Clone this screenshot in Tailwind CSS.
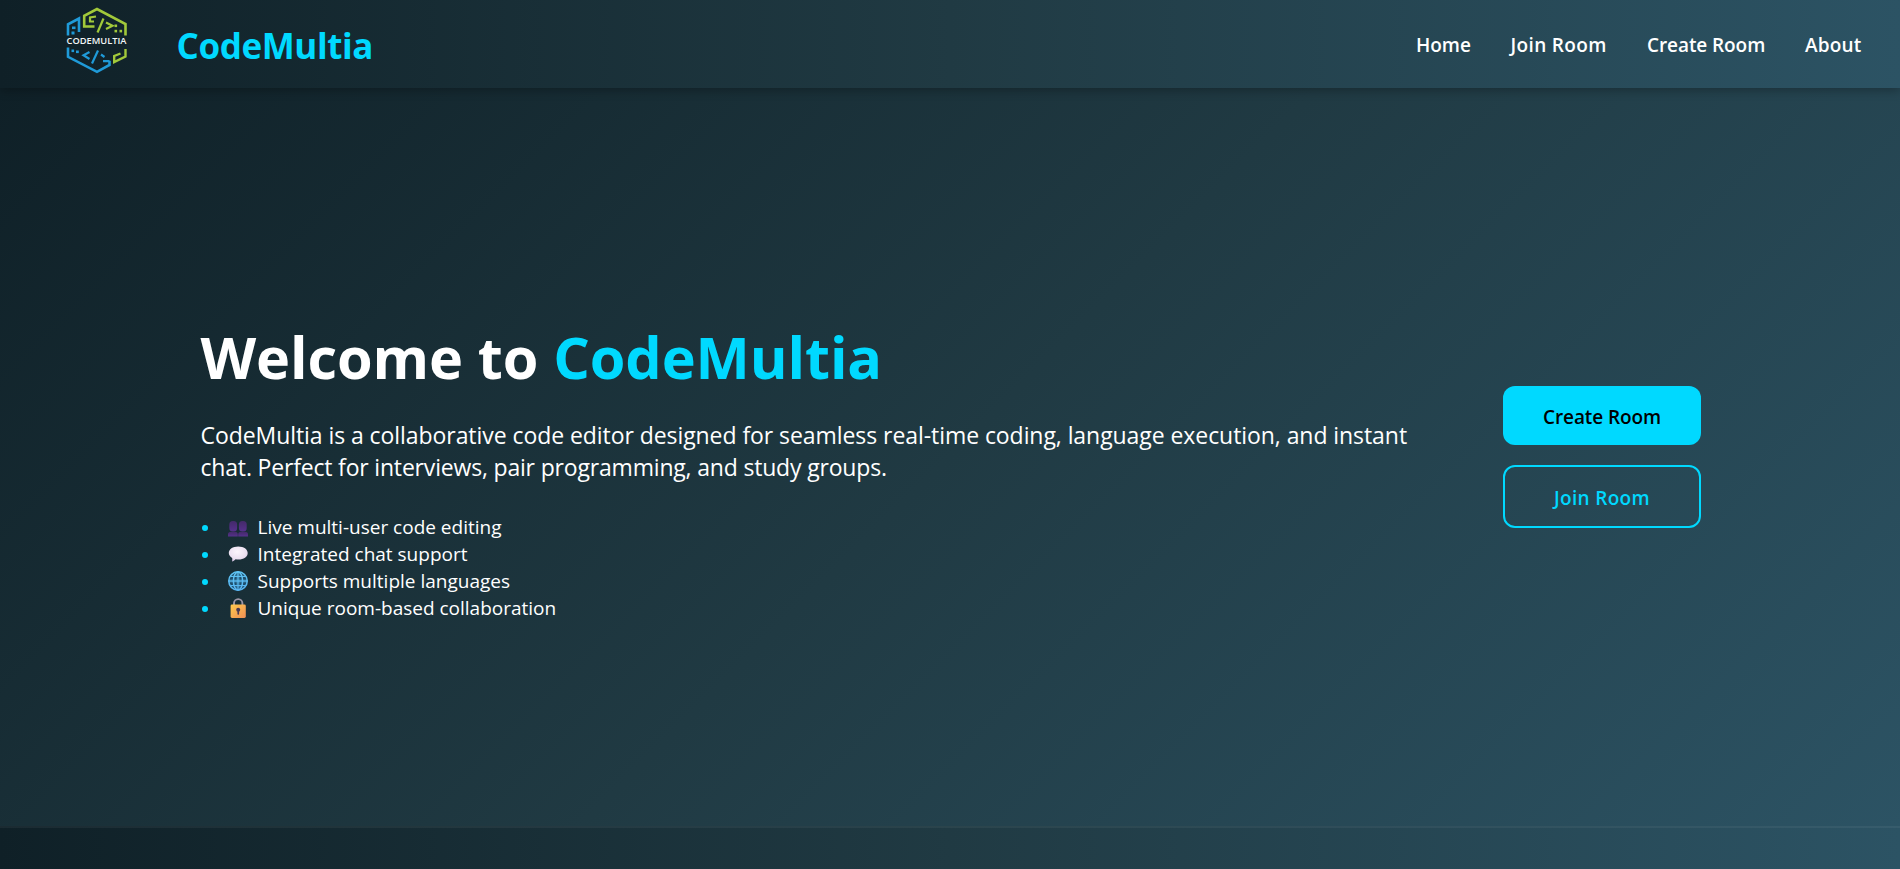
<!DOCTYPE html>
<html lang="en">
<head>
<meta charset="utf-8">
<title>CodeMultia</title>
<script src="https://cdn.jsdelivr.net/npm/@tailwindcss/browser@4"></script>
</head>
<body class="h-[869px] overflow-hidden flex flex-col font-['Open_Sans','Noto_Sans',sans-serif] text-white bg-[#0f2027]">
<header class="relative z-10 h-[88px] shrink-0 flex items-center justify-between pl-[60px] pr-[38px] bg-[linear-gradient(90deg,#0f2027,#203a43,#2c5364)] shadow-[0_2px_10px_rgba(0,0,0,0.3)]">
  <div class="flex items-center">
    <svg class="w-[74px] h-[74px] -mt-2" viewBox="0 0 74 74" fill="none" stroke-width="2.6">
      <g stroke="#a2c93a">
        <path d="M34.500 23.500H24.200V12.800L37 6L65.500 21V32.500"/>
        <path d="M36 13.500L30 14.500V18.500H34" stroke-width="2.200"/>
        <path d="M43.500 15.500L37.500 29.500" stroke-width="2.200"/>
        <path d="M46 19.500L52.500 22.700L46 26" stroke-width="2.200"/>
        <path d="M65.500 46V53.500L54.200 59V53L60.500 50.500" stroke-width="2.400"/>
      </g>
      <g fill="#a2c93a"><rect x="54.500" y="21.500" width="2.600" height="2.600"/><rect x="54.500" y="26.800" width="2.600" height="2.600"/><rect x="59.500" y="26.800" width="2.600" height="2.600"/></g>
      <g stroke="#1f9ad8">
        <path d="M8 32.500V21.300L19 15.500V29"/>
        <path d="M8 44.500V53.800L37 68.800L49.500 62V57.800"/>
        <path d="M29.500 49L23.500 52.300L29.500 56" stroke-width="2.200"/>
        <path d="M38 47.500L32 60.500" stroke-width="2.200"/>
        <path d="M41 51.500L44.500 54M49.500 58.200H43" stroke-width="2.200"/>
      </g>
      <g fill="#1f9ad8"><rect x="12" y="23.500" width="3.500" height="2.600"/><rect x="11.500" y="28.500" width="3" height="3"/><rect x="11.500" y="46.500" width="2.600" height="2.600"/><rect x="16" y="47.500" width="2.800" height="2.600"/></g>
      <text x="6.500" y="41.400" textLength="60" lengthAdjust="spacingAndGlyphs" font-family="Open Sans, sans-serif" font-weight="600" font-size="8.200" fill="#f3f6f7">CODEMULTIA</text>
    </svg>
    <span class="ml-[42.500px] mt-[3px] text-[35px] leading-10 font-bold tracking-[-0.400px] text-[#00d9ff]">CodeMultia</span>
  </div>
  <nav class="flex gap-10 mt-px text-[19px] leading-7 font-semibold whitespace-nowrap">
    <a class="w-[54.500px]">Home</a>
    <a class="w-[96.500px] tracking-[0.350px]">Join Room</a>
    <a class="w-[118px] tracking-[-0.080px]">Create Room</a>
    <a class="w-[57px] tracking-[0.200px]">About</a>
  </nav>
</header>

<main class="h-[738px] shrink-0 flex items-center justify-between px-[199.500px] bg-[linear-gradient(135deg,#0f2027,#203a43,#2c5364)]">
  <section class="pt-[26px] whitespace-nowrap">
    <h1 class="pl-px text-[57.600px] leading-[76px] font-bold tracking-[-0.100px]">Welcome to <span class="text-[#00d9ff]">CodeMultia</span></h1>
    <p class="pl-px mt-6 text-[23px] leading-8 tracking-[-0.065px]">CodeMultia is a collaborative code editor designed for seamless real-time coding, language execution, and instant<br><span class="tracking-[-0.180px]">chat. Perfect for interviews, pair programming, and study groups.</span></p>
    <ul class="mt-[30px] text-[19px] leading-[27px]">
      <li class="flex items-center h-[27px]"><i class="ml-[2px] mt-[3px] size-[6px] rounded-full bg-[#00d9ff]"></i>
        <svg class="ml-[20.500px] mt-[5px] size-5" viewBox="0 0 20 20">
          <defs><linearGradient id="p" x1="0" y1="0" x2="0" y2="1"><stop offset="0" stop-color="#432a69"/><stop offset="1" stop-color="#56318c"/></linearGradient></defs>
          <g fill="url(#p)"><rect x="1.300" y="2" width="7.800" height="10.500" rx="3.500"/><rect x="10.900" y="2" width="7.800" height="10.500" rx="3.500"/><path d="M0 17.500V15.500Q0 12.800 3 12.800H7Q9.800 12.800 9.800 15.500V17.500ZM10.200 17.500V15.500Q10.200 12.800 13 12.800H17Q20 12.800 20 15.500V17.500Z"/></g>
        </svg><span class="ml-[9.500px] mt-[2px]">Live multi-user code editing</span></li>
      <li class="flex items-center h-[27px]"><i class="ml-[2px] mt-[3px] size-[6px] rounded-full bg-[#00d9ff]"></i>
        <svg class="ml-[20.500px] size-5" viewBox="0 0 20 20">
          <defs><radialGradient id="s" cx=".45" cy=".35" r=".7"><stop offset="0" stop-color="#fbf5fc"/><stop offset=".7" stop-color="#eadff0"/><stop offset="1" stop-color="#c9b6d8"/></radialGradient></defs>
          <path fill="url(#s)" d="M10.200 2.500C15.800 2.500 19.700 5.300 19.700 9.100C19.700 13 15.800 15.600 10.500 15.600C9.500 15.600 8.500 15.500 7.600 15.300C6.500 16.500 5.300 17.300 4 17.500C4.300 16.500 4.400 15.300 4.200 14C2.200 12.900 .8 11.200 .8 9.100C.8 5.300 4.700 2.500 10.200 2.500Z"/>
        </svg><span class="ml-[9.500px] mt-[2px]">Integrated chat support</span></li>
      <li class="flex items-center h-[27px]"><i class="ml-[2px] mt-[3px] size-[6px] rounded-full bg-[#00d9ff]"></i>
        <svg class="ml-[20.500px] mt-px size-5" viewBox="0 0 20 20">
          <defs><linearGradient id="g" x1="0" y1="0" x2="0" y2="1"><stop offset="0" stop-color="#5fc4f2"/><stop offset="1" stop-color="#58b4f0"/></linearGradient></defs>
          <circle cx="10" cy="10" r="10" fill="#1d4e6c"/>
          <g fill="none" stroke="url(#g)" stroke-width="1.500"><circle cx="10" cy="10" r="9.200"/><ellipse cx="10" cy="10" rx="4.600" ry="9"/><path d="M9.250 1H10.750V19H9.250ZM1 9.300H19V10.700H1ZM2.800 5.400H17.200V5.500H2.800ZM2.800 14.500H17.200V14.600H2.800Z" stroke-width=".9"/></g>
        </svg><span class="ml-[9.500px] mt-[2px]">Supports multiple languages</span></li>
      <li class="flex items-center h-[27px]"><i class="ml-[2px] mt-[3px] size-[6px] rounded-full bg-[#00d9ff]"></i>
        <svg class="ml-[20.500px] mt-px size-5" viewBox="0 0 20 20">
          <defs><linearGradient id="l" x1="0" y1="0" x2="1" y2="1"><stop offset="0" stop-color="#ffcb4d"/><stop offset="1" stop-color="#f08e55"/></linearGradient></defs>
          <path d="M6 8V5.300A4.200 4.200 0 0 1 14.400 5.300V8" fill="none" stroke="#9c95a5" stroke-width="1.900"/>
          <rect x="2.600" y="6.600" width="15.200" height="13.400" rx="1.400" fill="url(#l)"/>
          <circle cx="10.200" cy="11.800" r="2" fill="#4a3a52"/><rect x="9.400" y="12" width="1.700" height="4.800" rx=".8" fill="#4a3a52"/>
        </svg><span class="ml-[9.500px] mt-[2px]">Unique room-based collaboration</span></li>
    </ul>
  </section>
  <section class="w-[198px] mr-[-0.500px] flex flex-col gap-5 text-[19px] leading-7 font-semibold">
    <button class="h-[59px] pt-[2px] rounded-xl bg-[#00d9ff] text-black tracking-[-0.100px]">Create Room</button>
    <button class="h-[63px] pt-[2px] rounded-xl border-2 border-[#00d9ff] text-[#00d9ff] tracking-[0.300px]">Join Room</button>
  </section>
</main>

<footer class="h-[43px] shrink-0 border-t-2 border-white/5 bg-[linear-gradient(90deg,#0f2027,#203a43,#2c5364)]"></footer>
</body>
</html>
